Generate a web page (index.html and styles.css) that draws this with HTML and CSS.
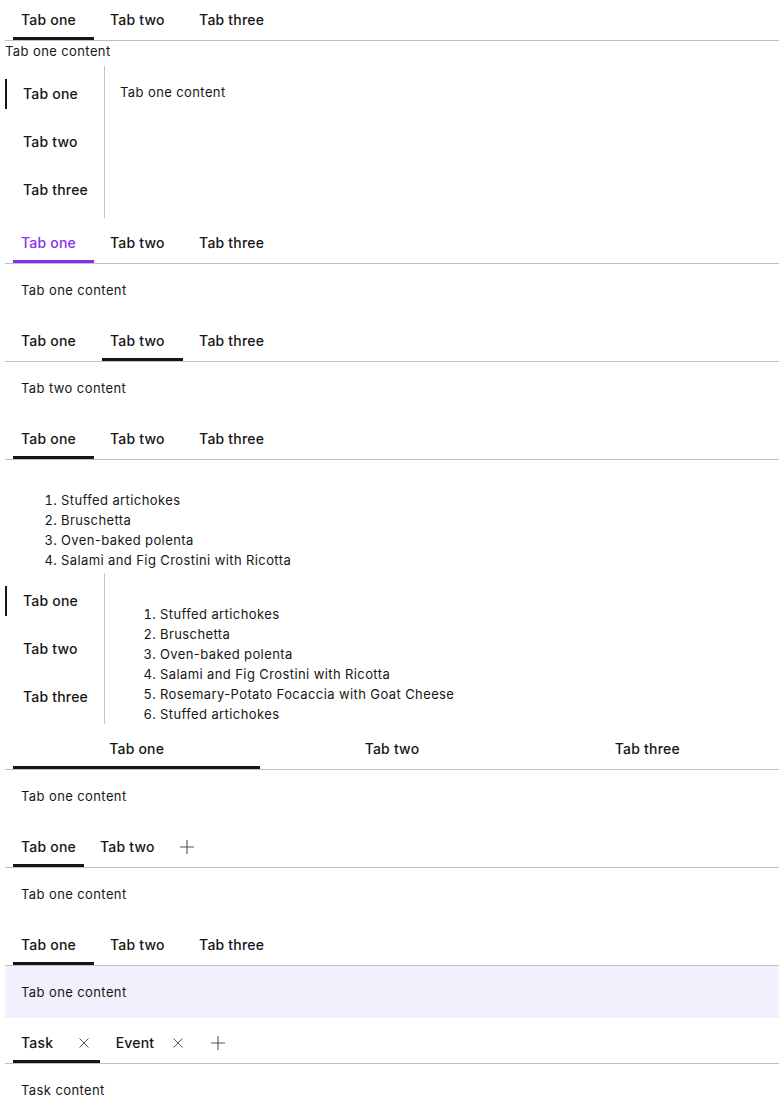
FILE: index.html
```html
<!DOCTYPE html>
<html>
<head>
<meta charset="utf-8">
<link rel="stylesheet" href="styles.css">
</head>
<body>
<div class="stack">

  <section class="tabs">
    <div class="tabbar">
      <div class="tablist">
        <div class="tab active">Tab one</div>
        <div class="tab">Tab two</div>
        <div class="tab">Tab three</div>
      </div>
    </div>
    <div class="panel bare">Tab one content</div>
  </section>

  <section class="vtabs">
    <div class="vlist">
      <div class="vtab active">Tab one</div>
      <div class="vtab">Tab two</div>
      <div class="vtab">Tab three</div>
    </div>
    <div class="vpanel">Tab one content</div>
  </section>

  <section class="tabs">
    <div class="tabbar">
      <div class="tablist">
        <div class="tab active purple">Tab one</div>
        <div class="tab">Tab two</div>
        <div class="tab">Tab three</div>
      </div>
    </div>
    <div class="panel">Tab one content</div>
  </section>

  <section class="tabs">
    <div class="tabbar">
      <div class="tablist">
        <div class="tab">Tab one</div>
        <div class="tab active">Tab two</div>
        <div class="tab">Tab three</div>
      </div>
    </div>
    <div class="panel">Tab two content</div>
  </section>

  <section class="tabs">
    <div class="tabbar">
      <div class="tablist">
        <div class="tab active">Tab one</div>
        <div class="tab">Tab two</div>
        <div class="tab">Tab three</div>
      </div>
    </div>
    <div class="panel panel-list">
      <ol class="list">
        <li>Stuffed artichokes</li>
        <li>Bruschetta</li>
        <li>Oven-baked polenta</li>
        <li>Salami and Fig Crostini with Ricotta</li>
      </ol>
    </div>
  </section>

  <section class="vtabs short">
    <div class="vlist">
      <div class="vtab active">Tab one</div>
      <div class="vtab">Tab two</div>
      <div class="vtab">Tab three</div>
    </div>
    <div class="vpanel">
      <ol class="list vlist-items">
        <li>Stuffed artichokes</li>
        <li>Bruschetta</li>
        <li>Oven-baked polenta</li>
        <li>Salami and Fig Crostini with Ricotta</li>
        <li>Rosemary-Potato Focaccia with Goat Cheese</li>
        <li>Stuffed artichokes</li>
      </ol>
    </div>
  </section>

  <section class="tabs">
    <div class="tabbar">
      <div class="tablist full">
        <div class="tab active">Tab one</div>
        <div class="tab">Tab two</div>
        <div class="tab">Tab three</div>
      </div>
    </div>
    <div class="panel">Tab one content</div>
  </section>

  <section class="tabs">
    <div class="tabbar">
      <div class="tablist">
        <div class="tab active">Tab one</div>
        <div class="tab">Tab two</div>
      </div>
      <div class="addbtn">
        <svg width="16" height="16" viewBox="0 0 16 16"><path d="M8 1v14M1 8h14" stroke="#525252" stroke-width="1.1" fill="none"/></svg>
      </div>
    </div>
    <div class="panel">Tab one content</div>
  </section>

  <section class="tabs">
    <div class="tabbar">
      <div class="tablist">
        <div class="tab active">Tab one</div>
        <div class="tab">Tab two</div>
        <div class="tab">Tab three</div>
      </div>
    </div>
    <div class="panel tinted">Tab one content</div>
  </section>

  <section class="tabs">
    <div class="tabbar">
      <div class="tablist">
        <div class="tab closable active"><span>Task</span>
          <svg class="close" width="16" height="16" viewBox="0 0 16 16"><path d="M3.5 3.5l9 9M12.5 3.5l-9 9" stroke="#525252" stroke-width="1" fill="none"/></svg>
        </div>
        <div class="tab closable"><span>Event</span>
          <svg class="close" width="16" height="16" viewBox="0 0 16 16"><path d="M3.5 3.5l9 9M12.5 3.5l-9 9" stroke="#525252" stroke-width="1" fill="none"/></svg>
        </div>
      </div>
      <div class="addbtn">
        <svg width="16" height="16" viewBox="0 0 16 16"><path d="M8 1v14M1 8h14" stroke="#525252" stroke-width="1.1" fill="none"/></svg>
      </div>
    </div>
    <div class="panel">Task content</div>
  </section>

</div>
</body>
</html>
```

FILE: styles.css
```css
html, body {
  margin: 0;
  background: #ffffff;
}

body {
  padding: 0 5px;
  font-family: Inter, "Liberation Sans", sans-serif;
  color: #161616;
  font-size: 13px;
  line-height: 20px;
  letter-spacing: 0.4px;
}

.stack {
  display: flex;
  flex-direction: column;
  gap: 5px;
}

.tabbar {
  display: flex;
  align-items: stretch;
  padding: 0 8px;
  border-bottom: 1px solid #c1c1c1;
}

.tablist {
  display: grid;
  grid-auto-flow: column;
  grid-auto-columns: 1fr;
  column-gap: 8px;
}

.tablist.full {
  flex: 1;
}

.tab {
  position: relative;
  height: 40px;
  padding: 0 8px;
  display: flex;
  align-items: center;
  font-size: 14px;
  font-weight: 500;
  letter-spacing: 0.2px;
  white-space: nowrap;
  color: #161616;
}

.tablist.full .tab {
  justify-content: center;
}

.tab.active::after {
  content: "";
  position: absolute;
  left: 0;
  right: 0;
  bottom: 0;
  height: 3px;
  background: #161616;
}

.tab.purple {
  color: #8c2ef0;
}

.tab.purple::after {
  background: #8c2ef0;
}

.tab.closable {
  justify-content: space-between;
  gap: 16px;
}

.close {
  display: block;
  flex: none;
}

.addbtn {
  width: 32px;
  margin-left: 8px;
  display: flex;
  align-items: center;
  justify-content: center;
}

.addbtn svg {
  display: block;
}

.panel {
  padding: 16px;
}

.panel.bare {
  padding: 0;
}

.panel.tinted {
  background: #f3f0fd;
}

.panel.panel-list {
  height: 108px;
  box-sizing: border-box;
  padding-bottom: 0;
  overflow: hidden;
}

.panel-list .list {
  margin: 14px 0 0;
}

.list {
  margin: 13px 0;
  padding-left: 40px;
}

.vtabs {
  display: flex;
  height: 152px;
}

.vtabs.short {
  height: 151px;
}

.vlist {
  flex: none;
  width: 100px;
  box-sizing: border-box;
  border-right: 1px solid #c6c6c6;
  padding: 4px 0 3px;
}

.vtab {
  position: relative;
  height: 48px;
  padding-left: 18px;
  display: flex;
  align-items: center;
  font-size: 14px;
  font-weight: 500;
  letter-spacing: 0.2px;
  white-space: nowrap;
}

.vtab.active::before {
  content: "";
  position: absolute;
  left: 0;
  top: 9px;
  width: 2px;
  height: 30px;
  background: #161616;
}

.vpanel {
  flex: 1;
  padding: 16px 15px;
  overflow: hidden;
}

.vpanel .vlist-items {
  margin-top: 15px;
}
```
